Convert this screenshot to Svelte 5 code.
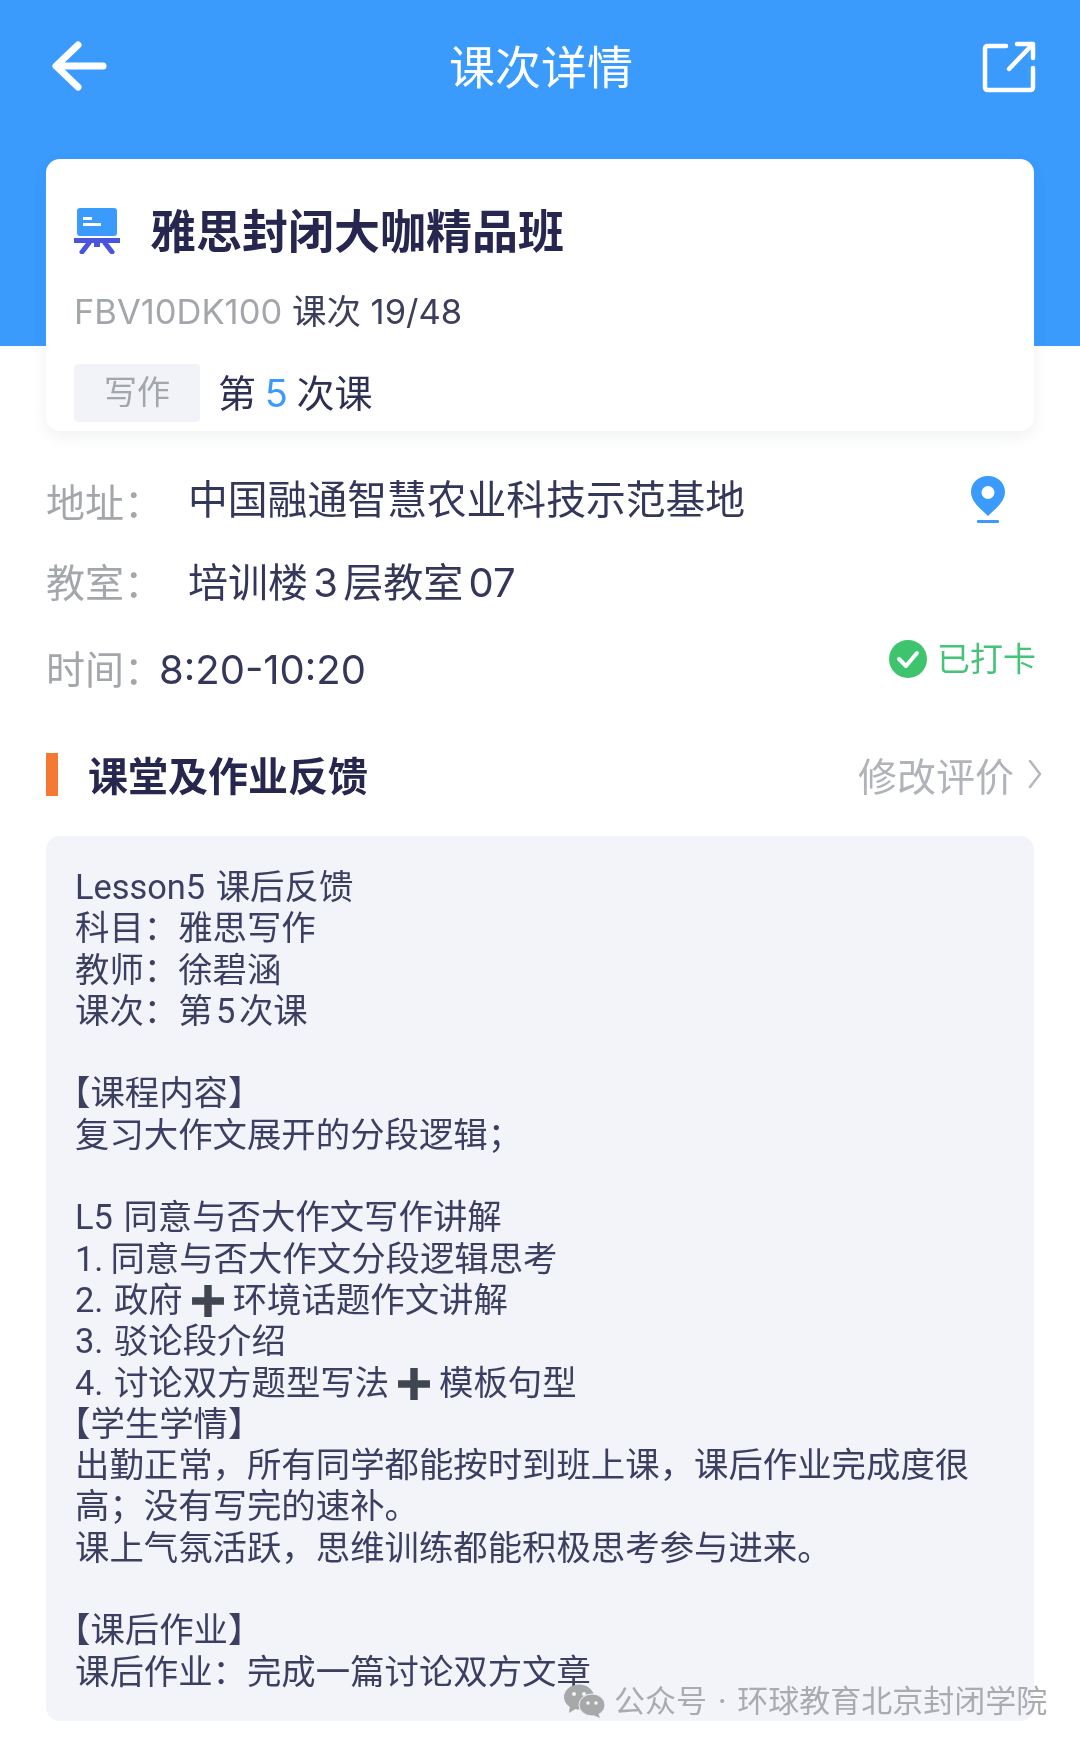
<script>
	const lines = [
		"Lesson5 课后反馈",
		"科目：雅思写作",
		"教师：徐碧涵",
		"课次：第\u200a5\u200a次课",
		"",
		"【课程内容】",
		"复习大作文展开的分段逻辑；",
		"",
		"L5 同意与否大作文写作讲解",
		"1.\u20091同意与否大作文分段逻辑思考".replace("\u20091", "\u2009"),
		"2. 政府+环境话题作文讲解",
		"3. 驳论段介绍",
		"4. 讨论双方题型写法+模板句型",
		"【学生学情】",
		"出勤正常，所有同学都能按时到班上课，课后作业完成度很",
		"高；没有写完的速补。",
		"课上气氛活跃，思维训练都能积极思考参与进来。",
		"",
		"【课后作业】",
		"课后作业：完成一篇讨论双方文章",
	];
</script>

<div class="page">
	<header class="top">
		<svg class="back" viewBox="0 0 56 50" width="56" height="50" fill="none" stroke="#fff" stroke-width="7" stroke-linecap="round" stroke-linejoin="round">
			<path d="M27 4 L5 25 L27 46" />
			<path d="M6 25 H52" />
		</svg>
		<h1>课次详情</h1>
		<svg class="share" viewBox="0 0 54 52" width="54" height="52" fill="none" stroke="#fff" stroke-width="4.5" stroke-linecap="round" stroke-linejoin="round">
			<path d="M24 5 H6 Q3 5 3 8 V46 Q3 49 6 49 H48 Q51 49 51 46 V27" />
			<path d="M27 28 L50 4" />
			<path d="M35 3 H51 V17" />
		</svg>
	</header>

	<section class="card">
		<div class="title-row">
			<svg viewBox="0 0 46 46" width="46" height="46">
				<rect x="3" y="0" width="40" height="28" rx="3" fill="#3a9bfd" />
				<rect x="9" y="9" width="9" height="3" fill="#fff" />
				<rect x="9" y="15" width="18" height="3" fill="#fff" />
				<rect x="0" y="30" width="46" height="5" fill="#4a55dd" />
				<path d="M15 35 L8 44 M31 35 L38 44" stroke="#4a55dd" stroke-width="5" stroke-linecap="round" />
				<rect x="20" y="35" width="6" height="4" fill="#4a55dd" />
			</svg>
			<h2>雅思封闭大咖精品班</h2>
		</div>
		<div class="code"><span class="muted">FBV10DK100</span> 课次 19/48</div>
		<div class="lesson">
			<span class="tag">写作</span>
			<span class="nth">第 <b>5</b> 次课</span>
		</div>
	</section>

	<div class="info">
		<div class="row addr">
			<span class="label">地址：</span>
			<span class="value">中国融通智慧农业科技示范基地</span>
			<svg class="pin" viewBox="0 0 36 48" width="36" height="48">
				<path fill-rule="evenodd" fill="#3a9bfd" d="M18 0 C8 0 1 7 1 16 C1 26 12 34 18 40 C24 34 35 26 35 16 C35 7 28 0 18 0 Z M18 10 A6.5 6.5 0 1 0 18 23 A6.5 6.5 0 1 0 18 10 Z" />
				<rect x="7" y="44" width="22" height="3" rx="1" fill="#3a9bfd" />
			</svg>
		</div>
		<div class="row room">
			<span class="label">教室：</span>
			<span class="value">培训楼 3 层教室 07</span>
		</div>
		<div class="row time">
			<span class="label short">时间：</span>
			<span class="value">8:20-10:20</span>
			<span class="checked">
				<svg viewBox="0 0 40 40" width="40" height="40">
					<circle cx="20" cy="20" r="19" fill="#3ec46d" />
					<path d="M11 20 L18 27 L29 14" fill="none" stroke="#fff" stroke-width="4" stroke-linecap="round" stroke-linejoin="round" />
				</svg>
				已打卡
			</span>
		</div>
	</div>

	<div class="section-head">
		<i class="bar"></i>
		<h3>课堂及作业反馈</h3>
		<span class="edit">修改评价
			<svg viewBox="0 0 14 30" width="14" height="30" fill="none" stroke="#b4b7bd" stroke-width="2.5" stroke-linecap="round" stroke-linejoin="round"><path d="M2 2 L12 15 L2 28" /></svg>
		</span>
	</div>

	<div class="feedback">
		{#each lines as line}
			<p class:bracket={line.startsWith("【")}>
				{#each line.split("+") as part, i}
					{#if i > 0}<svg class="plus" viewBox="0 0 32 32" width="34" height="34"><path d="M12.5 1 h7 v11.5 H31 v7 H19.5 V31 h-7 V19.5 H1 v-7 h11.5 Z" fill="#3f4650" /></svg>{/if}{part}
				{/each}
			</p>
		{/each}
	</div>

	<div class="watermark">
		<svg viewBox="0 0 42 34" width="42" height="34">
			<ellipse cx="16" cy="13" rx="15" ry="12.5" fill="#a6a8aa" />
			<path d="M7 21 L6 29 L14 24 Z" fill="#a6a8aa" />
			<circle cx="11" cy="10" r="2" fill="#f2f4f8" />
			<circle cx="21" cy="10" r="2" fill="#f2f4f8" />
			<ellipse cx="29" cy="21" rx="13" ry="11" fill="#a6a8aa" stroke="#f2f4f8" stroke-width="1" />
			<path d="M35 29 L37 34 L30 31 Z" fill="#a6a8aa" />
			<circle cx="25" cy="19" r="1.8" fill="#f2f4f8" />
			<circle cx="33" cy="19" r="1.8" fill="#f2f4f8" />
		</svg>
		<span>公众号 · 环球教育北京封闭学院</span>
	</div>
</div>

<style>
	:global(body) {
		margin: 0;
		background: #fff;
	}
	.page {
		position: relative;
		width: 1080px;
		height: 1743px;
		overflow: hidden;
		background: #fff;
		color: #2e3052;
		font-family: "Inter", "Noto Sans CJK SC", sans-serif;
		filter: blur(0.5px);
	}
	h1, h2, h3, p {
		margin: 0;
	}
	.top {
		height: 346px;
		box-sizing: border-box;
		background: #3a9bfd;
		padding: 41px 44px 0 51px;
		display: flex;
		justify-content: space-between;
		align-items: flex-start;
	}
	.top h1 {
		color: #fff;
		font-size: 46px;
		font-weight: 400;
		line-height: 52px;
		margin-left: -7px;
	}
	.card {
		margin: -187px 46px 0 46px;
		height: 272px;
		box-sizing: border-box;
		background: #fff;
		border-radius: 14px;
		padding: 46px 28px 0;
		box-shadow: 0 6px 16px rgba(60, 70, 100, 0.07);
		position: relative;
	}
	.title-row {
		display: flex;
		align-items: center;
		gap: 30px;
		height: 52px;
	}
	.title-row h2 {
		font-size: 46px;
		font-weight: 700;
		line-height: 52px;
		color: #26264e;
	}
	.code {
		margin-top: 33px;
		font-size: 34.5px;
		line-height: 44px;
		color: #3c3e5c;
	}
	.muted {
		color: #a3a6ab;
	}
	.lesson {
		margin-top: 24px;
		display: flex;
		align-items: center;
		gap: 18px;
		font-size: 38px;
		color: #2e3052;
	}
	.tag {
		width: 126px;
		height: 58px;
		margin-top: 6px;
		padding-bottom: 6px;
		box-sizing: border-box;
		background: #f1f3f8;
		border-radius: 4px;
		color: #a3a6ab;
		font-size: 33px;
		display: flex;
		align-items: center;
		justify-content: center;
	}
	.nth {
		word-spacing: -2px;
	}
	.lesson b {
		font-weight: 400;
		color: #3a9bfd;
	}
	.info {
		padding: 0 46px;
	}
	.row {
		display: flex;
		align-items: center;
		height: 50px;
		font-size: 40px;
		line-height: 50px;
	}
	.addr {
		margin-top: 44px;
	}
	.room {
		margin-top: 33px;
	}
	.time {
		margin-top: 37px;
	}
	.label {
		width: 142px;
		font-size: 39px;
		color: #a3a6ab;
		flex: none;
		white-space: nowrap;
	}
	.addr .label {
		padding-top: 6px;
	}
	.label.short {
		width: 113px;
	}
	.value {
		color: #34365a;
		flex: 1;
	}
	.addr .value {
		font-size: 39.8px;
	}
	.room .value {
		word-spacing: -6px;
	}
	.pin {
		margin-right: 28px;
	}
	.checked {
		display: flex;
		align-items: center;
		gap: 9px;
		color: #45c477;
		font-size: 33px;
		margin: -22px -2px 0 0;
	}
	.section-head {
		margin: 57px 38px 0 46px;
		display: flex;
		align-items: center;
		height: 44px;
	}
	.bar {
		width: 12px;
		height: 43px;
		background: #f47a33;
	}
	.section-head h3 {
		margin-left: 30px;
		font-size: 40px;
		font-weight: 700;
		color: #26264e;
		flex: 1;
	}
	.edit {
		display: flex;
		align-items: center;
		gap: 14px;
		font-size: 39px;
		color: #b0b3b9;
	}
	.feedback {
		margin: 40px 46px 0 46px;
		height: 885px;
		box-sizing: border-box;
		background: #f2f4f9;
		border-radius: 14px;
		padding: 31px 29px 0;
		font-family: "Roboto", "Noto Sans CJK SC", sans-serif;
		font-size: 34.4px;
		line-height: 41.3px;
		word-spacing: 2px;
		color: #3c3f62;
	}
	.feedback p {
		height: 41.3px;
		white-space: pre-wrap;
	}
	.feedback p.bracket {
		margin-left: -19px;
	}
	.plus {
		vertical-align: -6px;
		margin: 0 8px;
	}
	.watermark {
		position: absolute;
		left: 563px;
		top: 1681px;
		display: flex;
		align-items: center;
		gap: 9px;
		font-size: 31px;
		line-height: 40px;
		word-spacing: 2px;
		color: #a9abae;
		white-space: nowrap;
	}
</style>
